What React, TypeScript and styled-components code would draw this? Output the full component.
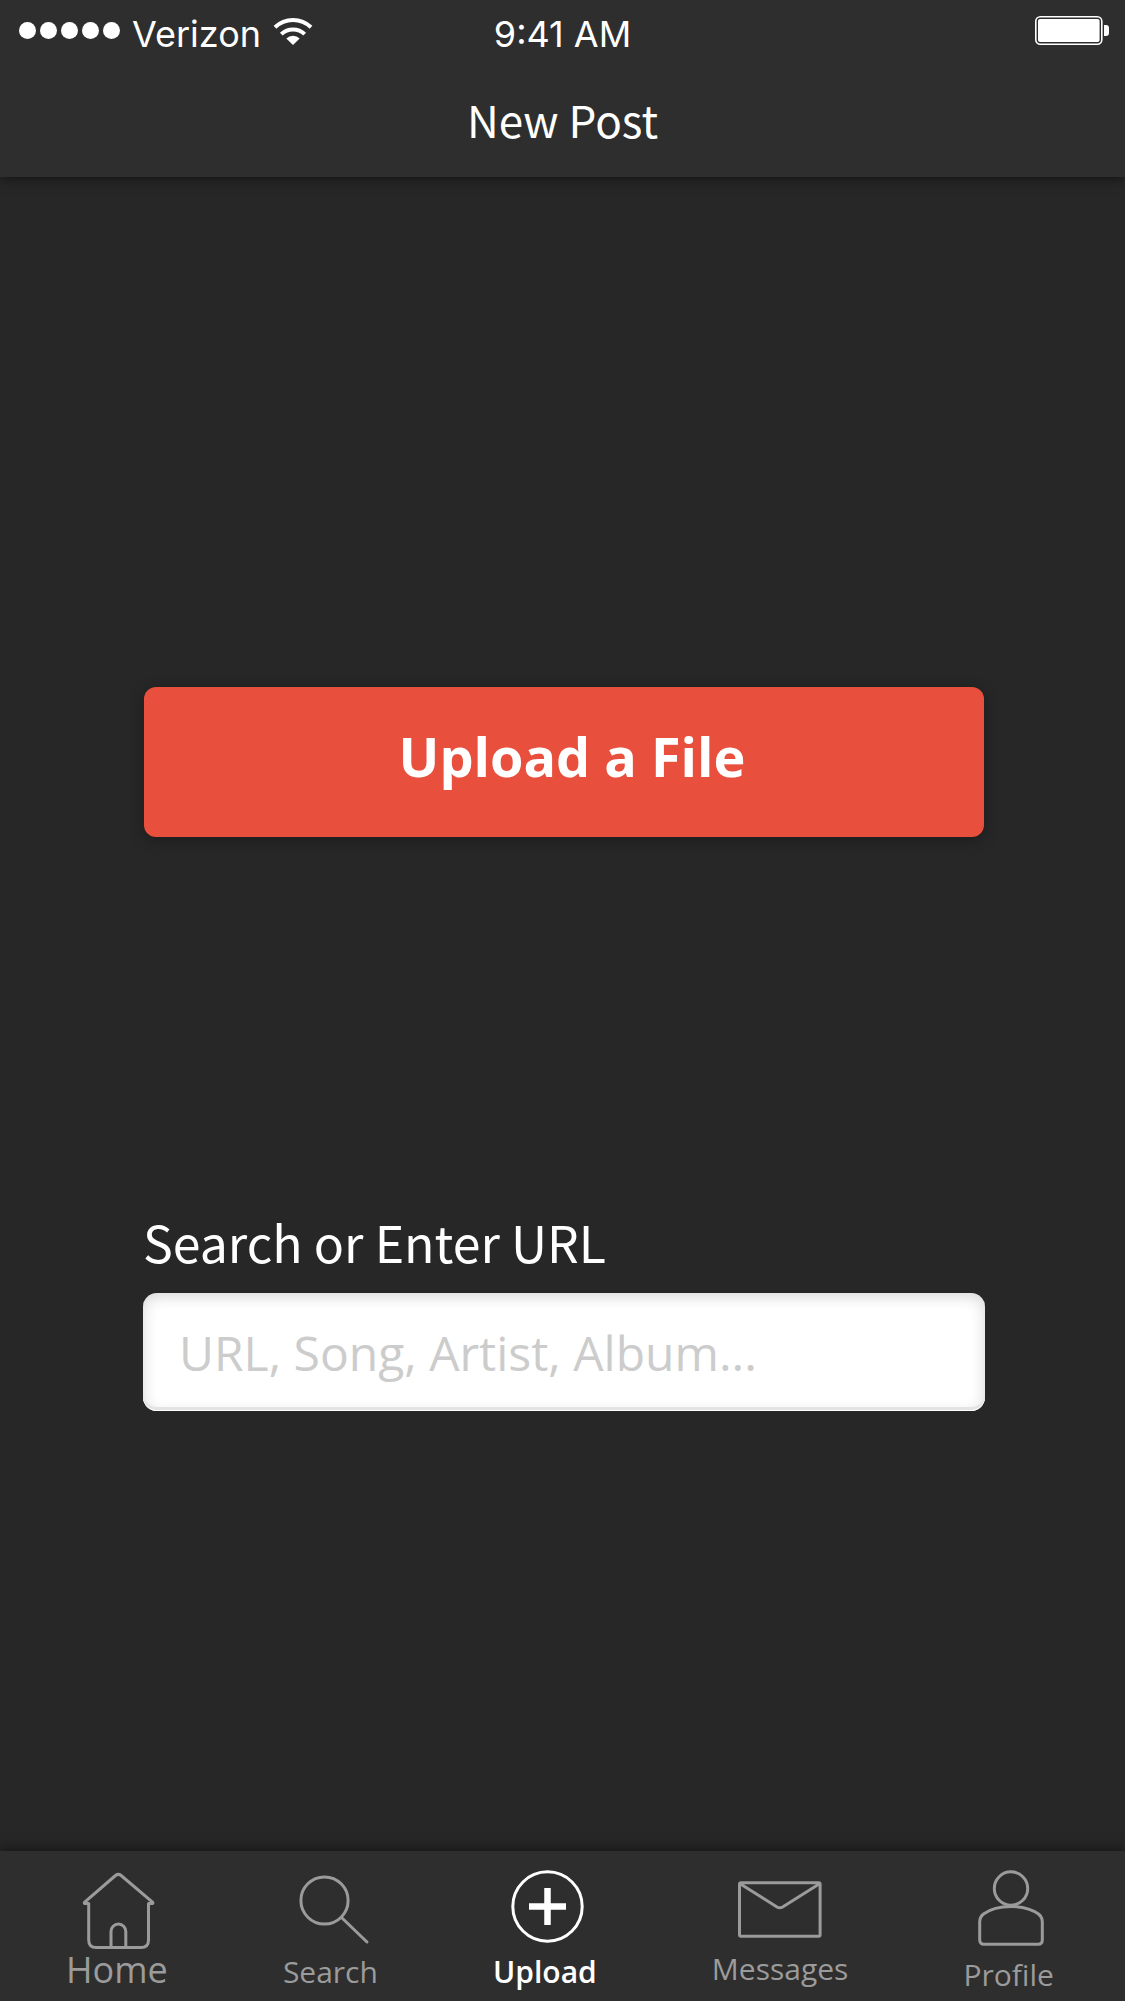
import React from "react";
import styled, { createGlobalStyle } from "styled-components";

const colors = {
  page: "#272727",
  bar: "#2e2e2e",
  accent: "#e84f3d",
  muted: "#9b9b9b",
  placeholder: "#cccccc",
  text: "#ffffff",
};

const headingFont = `"Noto Sans CJK SC", "Open Sans", sans-serif`;

const GlobalStyle = createGlobalStyle`
  *, *::before, *::after { box-sizing: border-box; }
  body {
    margin: 0;
    background: ${colors.page};
    color: ${colors.text};
    font-family: "Open Sans", "Noto Sans", sans-serif;
  }
`;

const Screen = styled.div`
  display: flex;
  flex-direction: column;
  min-height: 100vh;
`;

const Header = styled.header`
  background: ${colors.bar};
  box-shadow: 0 2px 12px rgba(0, 0, 0, 0.5);
`;

const StatusBar = styled.div`
  display: grid;
  grid-template-columns: 1fr auto 1fr;
  height: 60px;
  padding: 0 16px;
  font-family: Inter, "Liberation Sans", sans-serif;
  font-size: 36px;
  line-height: 60px;
`;

const Carrier = styled.div`
  display: flex;
  align-items: flex-start;
  padding-left: 3px;
`;

const CarrierName = styled.span`
  margin: 0 12px;
  padding-top: 4px;
`;

const Clock = styled.time`
  padding-top: 4px;
`;

const Signal = styled.div`
  display: flex;
  gap: 4px;
  padding-top: 22px;
`;

const SignalDot = styled.span`
  width: 17px;
  height: 17px;
  border-radius: 50%;
  background: ${colors.text};
`;

const Wifi = styled.svg`
  margin-top: 17px;
`;

const Battery = styled.div`
  display: flex;
  align-items: flex-start;
  justify-content: flex-end;
  padding-top: 16px;
`;

const Title = styled.h1`
  margin: 0;
  height: 117px;
  padding-top: 29px;
  font-family: ${headingFont};
  font-size: 44px;
  font-weight: 400;
  line-height: 60px;
  text-align: center;
`;

const Main = styled.main`
  flex: 1;
  display: flex;
  flex-direction: column;
  padding: 510px 140px 0 143px;
`;

const UploadButton = styled.button`
  height: 150px;
  margin: 0 1px;
  padding: 0 0 12px 16px;
  border: 0;
  border-radius: 12px;
  background: ${colors.accent};
  box-shadow: 0 3px 15px rgba(0, 0, 0, 0.3);
  color: ${colors.text};
  font: inherit;
  font-size: 54px;
  font-weight: 700;
`;

const SearchForm = styled.form`
  display: flex;
  flex-direction: column;
  gap: 16px;
  margin-top: 368px;
`;

const FieldLabel = styled.label`
  font-family: ${headingFont};
  font-size: 50px;
  line-height: 72px;
`;

const FieldInput = styled.input`
  width: 100%;
  height: 118px;
  padding: 0 36px;
  border: 0;
  border-radius: 14px;
  background: #ffffff;
  box-shadow:
    inset 0 -1px 0 #ffffff,
    inset 0 -4px 0 #e4e4e4,
    inset 0 3px 15px rgba(0, 0, 0, 0.16);
  color: #333333;
  font: inherit;
  font-size: 48px;

  &::placeholder {
    color: ${colors.placeholder};
    opacity: 1;
  }
`;

const TabBar = styled.nav`
  display: flex;
  align-items: flex-start;
  justify-content: space-between;
  height: 150px;
  padding: 16px 71px 0 66px;
  background: ${colors.bar};
  box-shadow: 0 -2px 12px rgba(0, 0, 0, 0.5);
`;

const Tab = styled.a<{ $active?: boolean; $large?: boolean }>`
  display: flex;
  flex-direction: column;
  align-items: center;
  color: ${(p) => (p.$active ? colors.text : colors.muted)};
  font-size: ${(p) => (p.$large ? 36 : 30)}px;
  font-weight: ${(p) => (p.$active ? 600 : 400)};
  line-height: 42px;
  text-decoration: none;
`;

const TabIcon = styled.svg`
  display: block;
  fill: none;
  stroke: currentColor;
  stroke-width: 3;
  stroke-linecap: round;
  stroke-linejoin: round;
`;

const PlusStroke = styled.path`
  stroke-width: 6.5;
  stroke-linecap: butt;
`;

const WifiIcon = () => (
  <Wifi width="40" height="28" viewBox="0 0 40 28" fill="none" stroke="#fff" strokeWidth="4" aria-hidden="true">
    <path d="M2 10.2a26 26 0 0 1 36 0" />
    <path d="M8.3 17.1a17 17 0 0 1 23.4 0" />
    <path d="M20 28l-6.7-6.6a10 10 0 0 1 13.4 0z" fill="#fff" stroke="none" />
  </Wifi>
);

const BatteryIcon = () => (
  <svg width="74" height="29" viewBox="0 0 74 29" role="img" aria-label="Battery full">
    <rect x="0.8" y="0.8" width="66" height="27.4" rx="4.5" fill="none" stroke="#fff" strokeWidth="1.6" />
    <rect x="3" y="3" width="61.6" height="23" rx="2" fill="#fff" />
    <path d="M69 9h2q3 0 3 3v5q0 3-3 3h-2z" fill="#fff" />
  </svg>
);

const HomeIcon = () => (
  <TabIcon width="88" height="82" viewBox="0 0 88 82" aria-hidden="true">
    <path d="M15.7 36.5h-4q-.8-.6 0-1.3L42.5 8.5q2.8-2.2 5.6 0L79.5 35.2q.8.7 0 1.3h-4V73q0 7.5-7.5 7.5H23.2q-7.5 0-7.5-7.5z" />
    <path d="M38 80V64.5a7.4 7.4 0 0 1 14.8 0V80" />
  </TabIcon>
);

const SearchIcon = () => (
  <TabIcon width="88" height="84" viewBox="0 0 88 84" aria-hidden="true">
    <circle cx="38.5" cy="33.5" r="23.6" />
    <path d="M55.5 50.5L81 75" />
  </TabIcon>
);

const UploadIcon = () => (
  <TabIcon width="88" height="84" viewBox="0 0 88 84" aria-hidden="true">
    <circle cx="46.5" cy="39.5" r="34.7" />
    <PlusStroke d="M46.5 21v37M28 39.5h37" />
  </TabIcon>
);

const MessagesIcon = () => (
  <TabIcon width="88" height="81" viewBox="0 0 88 81" aria-hidden="true">
    <rect x="3.5" y="15.7" width="80.6" height="53.5" rx="1.5" />
    <path d="M4.5 17L41 40q2.8 1.6 5.600 0L83.100 17" />
  </TabIcon>
);

const ProfileIcon = () => (
  <TabIcon width="88" height="87" viewBox="0 0 88 87" aria-hidden="true">
    <circle cx="46" cy="21.5" r="16.7" />
    <path d="M46 39.5c12 0 22 3.5 27.5 7.5q3.8 3 3.8 8v18q0 4.3-4.3 4.3H19q-4.3 0-4.3-4.3V55q0-5 3.8-8C24 43 34 39.5 46 39.5z" />
  </TabIcon>
);

const tabs = [
  { name: "Home", Icon: HomeIcon, large: true },
  { name: "Search", Icon: SearchIcon },
  { name: "Upload", Icon: UploadIcon, active: true },
  { name: "Messages", Icon: MessagesIcon },
  { name: "Profile", Icon: ProfileIcon },
];

export default function App() {
  return (
    <Screen>
      <GlobalStyle />
      <Header>
        <StatusBar>
          <Carrier>
            <Signal>
              {[1, 2, 3, 4, 5].map((n) => (
                <SignalDot key={n} />
              ))}
            </Signal>
            <CarrierName>Verizon</CarrierName>
            <WifiIcon />
          </Carrier>
          <Clock>9:41 AM</Clock>
          <Battery>
            <BatteryIcon />
          </Battery>
        </StatusBar>
        <Title>New Post</Title>
      </Header>
      <Main>
        <UploadButton type="button">Upload a File</UploadButton>
        <SearchForm onSubmit={(e) => e.preventDefault()}>
          <FieldLabel htmlFor="source">Search or Enter URL</FieldLabel>
          <FieldInput id="source" type="text" placeholder="URL, Song, Artist, Album..." />
        </SearchForm>
      </Main>
      <TabBar>
        {tabs.map(({ name, Icon, active, large }) => (
          <Tab key={name} href={`#${name.toLowerCase()}`} $active={active} $large={large} aria-current={active ? "page" : undefined}>
            <Icon />
            {name}
          </Tab>
        ))}
      </TabBar>
    </Screen>
  );
}
